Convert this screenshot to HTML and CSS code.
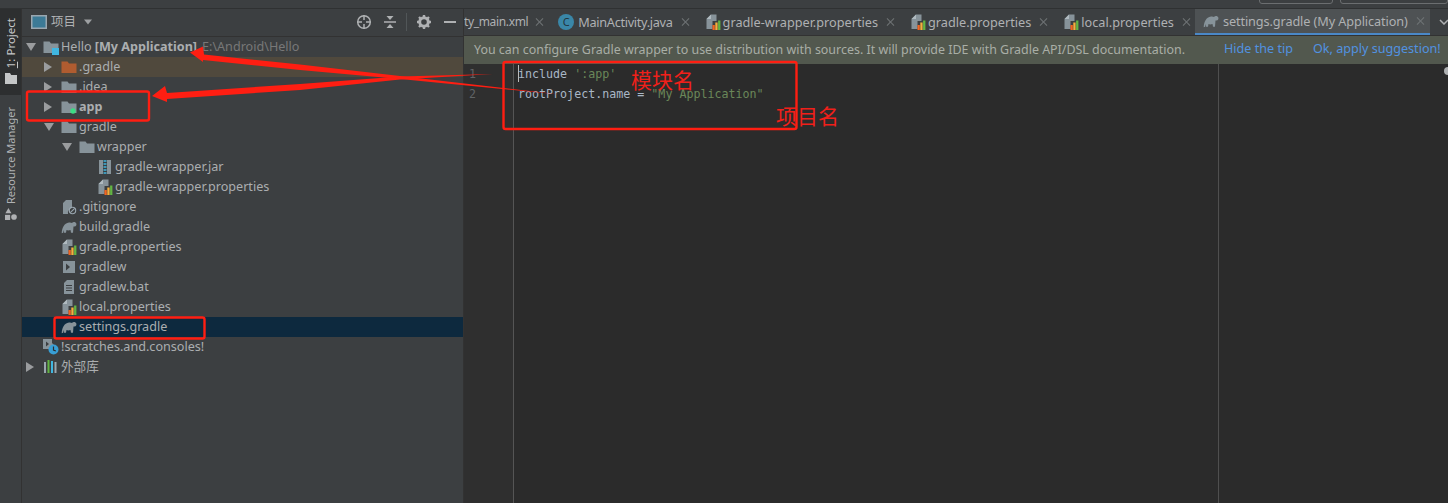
FILE: index.html
```html
<!DOCTYPE html>
<html lang="zh">
<head>
<meta charset="utf-8">
<title>settings.gradle</title>
<link rel="stylesheet" href="styles.css">
</head>
<body>
<svg class="defs" width="0" height="0" aria-hidden="true">
  <defs>
    <symbol id="folder" viewBox="0 0 16 16"><path d="M0.500 2.500h6l1.500 2h7.500v9.500H0.500z" fill="#87939a"/></symbol>
    <symbol id="props" viewBox="0 0 16 16"><path d="M6 0.500h5.500V7H7.500v8H1.500V5z" fill="#87939a"/><path d="M6 .5L1.500 5H6z" fill="#b0bac0"/><rect x="7.500" y="11" width="2.300" height="5" fill="#f26522"/><rect x="10.300" y="8.500" width="2.300" height="7.500" fill="#f4af3d"/><rect x="13.100" y="6.500" width="2.300" height="9.500" fill="#62b543"/></symbol>
    <symbol id="elephant" viewBox="0 0 16 16"><path d="M.7 14.300C1 9 3 4.300 8 3.600c1.500-.2 2.500.2 3 .4 1-1.500 3.500-1.500 4.300.5.500 1.500-.3 3-1.800 3h-1l-.5 6.300h-2l-.5-2.800c-1.500.5-3 .5-4 0l-.5 2.800h-2l-.2-2.800c-.3 1-.6 2-.6 2.800z" fill="#87939a"/></symbol>
  </defs>
</svg>

<div class="titlebar">
  <span class="combo combo-run"></span>
  <span class="combo combo-device"></span>
</div>

<div class="workspace">
  <aside class="stripe">
    <div class="stripe-tab stripe-tab-active">
      <svg class="stripe-icon" viewBox="0 0 12 12"><path d="M0 1h5l1.200 2H12v9H0z" fill="#c4c6c7"/></svg>
      <span class="vertical"><span class="u">1</span>: Project</span>
    </div>
    <div class="stripe-tab">
      <svg class="stripe-icon" viewBox="0 0 14 14"><path d="M4 0l3.500 6h-7z" fill="#afb1b3"/><rect x="0" y="8" width="6" height="6" fill="#afb1b3"/><circle cx="10.500" cy="10.500" r="3.300" fill="#afb1b3"/></svg>
      <span class="vertical">Resource Manager</span>
    </div>
  </aside>

  <section class="panel">
    <header class="panel-head">
      <svg class="view-icon" viewBox="0 0 16 14"><rect x=".75" y=".75" width="14.500" height="12.500" fill="#3c7a96" stroke="#9aa7b0" stroke-width="1.500"/></svg>
      <span class="panel-title">项目</span>
      <svg class="caret" viewBox="0 0 10 6"><path d="M1 .5h8L5 5.500z" fill="#9da0a2"/></svg>
      <span class="spacer"></span>
      <svg class="tool" viewBox="0 0 16 16"><circle cx="8" cy="8" r="6.300" fill="none" stroke="#afb1b3" stroke-width="1.500"/><path d="M8 1v5M8 10v5M1 8h5M10 8h5" stroke="#afb1b3" stroke-width="1.500"/></svg>
      <svg class="tool tool-b" viewBox="0 0 16 16"><path d="M2 8h12" stroke="#afb1b3" stroke-width="1.500"/><path d="M4.500 2h7L8 6zM4.500 14h7L8 10z" fill="#afb1b3"/></svg>
      <span class="sep"></span>
      <svg class="tool tool-c" viewBox="0 0 16 16"><circle cx="8" cy="8" r="4.300" fill="none" stroke="#afb1b3" stroke-width="3"/><path d="M8 1v3M8 12v3M1 8h3M12 8h3M3 3l2 2M11 11l2 2M13 3l-2 2M5 11l-2 2" stroke="#afb1b3" stroke-width="2.400"/></svg>
      <svg class="tool tool-d" viewBox="0 0 16 16"><path d="M2 8h12" stroke="#afb1b3" stroke-width="2"/></svg>
    </header>

    <ul class="tree">
      <li class="row d0"><i class="tw open"></i><span class="ic"><svg viewBox="0 0 16 16"><use href="#folder"/><rect x="9" y="9" width="7" height="7" fill="#40b6e0"/></svg></span><span class="name">Hello <b>[My Application]</b></span><span class="path">E:\Android\Hello</span></li>
      <li class="row d1 row-excluded"><i class="tw"></i><span class="ic"><svg viewBox="0 0 16 16"><path d="M.5 2.500h6l1.500 2h7.500v9.500H.5z" fill="#b05c30"/></svg></span><span class="name">.gradle</span></li>
      <li class="row d1"><i class="tw"></i><span class="ic"><svg><use href="#folder"/></svg></span><span class="name">.idea</span></li>
      <li class="row d1"><i class="tw"></i><span class="ic"><svg viewBox="0 0 16 16"><use href="#folder"/><circle cx="12" cy="12" r="2.700" fill="#3ddc84"/></svg></span><span class="name"><b>app</b></span></li>
      <li class="row d1"><i class="tw open"></i><span class="ic"><svg><use href="#folder"/></svg></span><span class="name">gradle</span></li>
      <li class="row d2"><i class="tw open"></i><span class="ic"><svg><use href="#folder"/></svg></span><span class="name">wrapper</span></li>
      <li class="row d3"><i class="tw none"></i><span class="ic"><svg viewBox="0 0 16 16"><rect x="2" y="1" width="12" height="14" fill="#87939a"/><rect x="6" y="1" width="4" height="14" fill="#3c3f41"/><path d="M6.500 2h3M6.500 5h3M6.500 8h3M6.500 11h3M6.500 14h3" stroke="#40b6e0" stroke-width="1.300"/></svg></span><span class="name">gradle-wrapper.jar</span></li>
      <li class="row d3"><i class="tw none"></i><span class="ic"><svg><use href="#props"/></svg></span><span class="name">gradle-wrapper.properties</span></li>
      <li class="row d1"><i class="tw none"></i><span class="ic"><svg viewBox="0 0 16 16"><path d="M5 1h6v8a5 5 0 0 0-4 6H2V4z" fill="#87939a"/><circle cx="11.500" cy="11.500" r="3.200" fill="none" stroke="#9aa7b0" stroke-width="1.100"/><path d="M9.300 13.700l4.400-4.400" stroke="#9aa7b0" stroke-width="1.100"/></svg></span><span class="name">.gitignore</span></li>
      <li class="row d1"><i class="tw none"></i><span class="ic"><svg><use href="#elephant"/></svg></span><span class="name">build.gradle</span></li>
      <li class="row d1"><i class="tw none"></i><span class="ic"><svg><use href="#props"/></svg></span><span class="name">gradle.properties</span></li>
      <li class="row d1"><i class="tw none"></i><span class="ic"><svg viewBox="0 0 16 16"><rect x="2" y="2" width="12" height="12" fill="#87939a"/><path d="M5 4.500L9 8l-4 3.500z" fill="#3c3f41"/></svg></span><span class="name">gradlew</span></li>
      <li class="row d1"><i class="tw none"></i><span class="ic"><svg viewBox="0 0 16 16"><path d="M6 1h7v14H3V4z" fill="#87939a"/><path d="M5 6.500h6M5 9h6M5 11.500h6" stroke="#3c3f41" stroke-width="1.100"/></svg></span><span class="name">gradlew.bat</span></li>
      <li class="row d1"><i class="tw none"></i><span class="ic"><svg><use href="#props"/></svg></span><span class="name">local.properties</span></li>
      <li class="row d1 row-selected"><i class="tw none"></i><span class="ic"><svg><use href="#elephant"/></svg></span><span class="name">settings.gradle</span></li>
      <li class="row d0"><i class="tw none"></i><span class="ic"><svg viewBox="0 0 16 16"><path d="M0 0h9v4l2 2a5.500 5.500 0 0 0-5 4H0z" fill="#87939a"/><path d="M3 2.500L6 5 3 7.500z" fill="#3c3f41"/><circle cx="10.500" cy="10.500" r="5" fill="#389fd6"/><path d="M10.500 7.500v3.500l2.300 1" fill="none" stroke="#2b2d2e" stroke-width="1.200"/></svg></span><span class="name">!scratches.and.consoles!</span></li>
      <li class="row d0"><i class="tw"></i><span class="ic"><svg viewBox="0 0 16 16"><rect x="1" y="3" width="2" height="11" fill="#9aa7b0"/><rect x="4.500" y="1" width="2" height="13" fill="#62b543"/><rect x="8" y="2" width="2" height="12" fill="#40b6e0"/><rect x="11.500" y="3" width="2" height="11" fill="#9aa7b0"/></svg></span><span class="name">外部库</span></li>
    </ul>
  </section>

  <main class="editor">
    <nav class="tabs">
      <div class="tab tab-first"><span>ty_main.xml</span><i class="x"></i></div>
      <div class="tab tab-java"><span class="cls">C</span><span>MainActivity.java</span><i class="x"></i></div>
      <div class="tab"><svg class="tab-ic"><use href="#props"/></svg><span>gradle-wrapper.properties</span><i class="x"></i></div>
      <div class="tab"><svg class="tab-ic"><use href="#props"/></svg><span>gradle.properties</span><i class="x"></i></div>
      <div class="tab"><svg class="tab-ic"><use href="#props"/></svg><span>local.properties</span><i class="x"></i></div>
      <div class="tab tab-active"><svg class="tab-ic"><use href="#elephant"/></svg><span>settings.gradle (My Application)</span><i class="x"></i></div>
      <svg class="chevron" viewBox="0 0 10 6"><path d="M1 1l4 4 4-4" fill="none" stroke="#afb1b3" stroke-width="1.500"/></svg>
    </nav>
    <div class="notice">
      <span class="notice-text">You can configure Gradle wrapper to use distribution with sources. It will provide IDE with Gradle API/DSL documentation.</span>
      <a class="link link-hide">Hide the tip</a>
      <a class="link">Ok, apply suggestion!</a>
    </div>
    <div class="code">
      <div class="gutter"><div>1</div><div>2</div></div>
      <div class="lines">
        <div class="line"><span class="caret-bar"></span>include <span class="str">':app'</span></div>
        <div class="line">rootProject.name = <span class="str">"My Application"</span></div>
      </div>
      <span class="margin-line"></span>
      <span class="inspect"></span>
    </div>
  </main>
</div>

<!-- red annotations drawn over the screenshot -->
<svg class="marks" viewBox="0 0 1448 503" aria-hidden="true">
  <path d="M190 52.500L203 46.500L204 54.500L300 64.500L400 76L560 94.500L400 79L300 70L203 60L203 62z" fill="#ff1e12"/>
  <path d="M152 96L165 86L167 93L300 84L400 76.500L493 74L400 79.500L300 90L167 99L167 102z" fill="#ff1e12"/>
  <g fill="none" stroke="#ff1e12" stroke-width="2.400">
    <rect x="27" y="91.500" width="122" height="29" rx="2"/>
    <rect x="54.500" y="317.500" width="150" height="21" rx="2"/>
    <rect x="503.500" y="62" width="293" height="67" rx="2"/>
  </g>
</svg>
<span class="note note-module">模块名</span>
<span class="note note-project">项目名</span>
</body>
</html>
```

FILE: styles.css
```css
* { box-sizing: border-box; }
html, body { margin: 0; padding: 0; }
body {
  width: 1448px;
  height: 503px;
  overflow: hidden;
  position: relative;
  display: flex;
  flex-direction: column;
  background: #3c3f41;
  color: #afb1b3;
  font: 12.700px/20px "Noto Sans", "Noto Sans CJK SC", sans-serif;
}
.defs { position: absolute; }

.titlebar {
  height: 9px;
  flex: none;
  background: #3c3f41;
  border-bottom: 1px solid #2f3132;
  overflow: hidden;
  display: flex;
  justify-content: flex-end;
  gap: 7px;
}
.combo {
  display: block;
  height: 12px;
  margin-top: -8px;
  border: 1px solid #6b6e70;
  border-radius: 3px;
}
.combo-run { width: 74px; }
.combo-device { width: 108px; margin-right: 0; }

.workspace { flex: 1; min-height: 0; display: flex; }

.stripe {
  width: 22px;
  flex: none;
  background: #3c3f41;
  border-right: 1px solid #323232;
  display: flex;
  flex-direction: column;
}
.stripe-tab {
  display: flex;
  flex-direction: column-reverse;
  align-items: center;
  gap: 4px;
  padding: 12px 0 4px;
  color: #b0b2b4;
}
.stripe-tab-active { height: 86px; background: #2d2f30; padding: 8px 0 11px; justify-content: flex-start; }
.stripe-tab-active .vertical { font-size: 11.500px; color: #c4c6c7; }
.stripe-icon { width: 12px; height: 12px; flex: none; }
.vertical {
  writing-mode: vertical-rl;
  transform: rotate(180deg);
  line-height: 14px;
  white-space: nowrap;
  font-size: 11px;
}
.u { text-decoration: underline; }

.panel {
  width: 442px;
  flex: none;
  background: #3c3f41;
  border-right: 1px solid #323232;
  display: flex;
  flex-direction: column;
  min-height: 0;
}
.panel-head {
  height: 28px;
  flex: none;
  display: flex;
  align-items: center;
  padding: 0 0 2px 9px;
  border-bottom: 1px solid #323232;
}
.view-icon { width: 16px; height: 14px; }
.panel-title { margin-left: 4px; color: #afb1b3; font-size: 12.500px; }
.caret { width: 10px; height: 6px; margin-left: 7px; }
.spacer { flex: 1; }
.tool { width: 16px; height: 16px; flex: none; }
.tool-b { margin-left: 10px; }
.sep { width: 1px; height: 18px; background: #515658; margin: 0 9px 0 8px; }
.tool-d { margin: 0 5px 0 10px; }

.tree { list-style: none; margin: 0; padding: 0; font-size: 12.600px; }
.row { height: 20px; display: flex; align-items: center; white-space: nowrap; }
.d0 { padding-left: 3px; }
.d1 { padding-left: 21px; }
.d2 { padding-left: 39px; }
.d3 { padding-left: 57px; }
.row-excluded { background: #50493d; }
.row-selected { background: #0d293e; }
.tw { width: 18px; flex: none; display: flex; justify-content: flex-start; padding-left: 1px; }
.tw::before {
  content: "";
  border-left: 8px solid #9a9c9e;
  border-top: 5px solid transparent;
  border-bottom: 5px solid transparent;
}
.tw.open::before {
  border-top: 8px solid #9a9c9e;
  border-left: 5px solid transparent;
  border-right: 5px solid transparent;
  border-bottom: 0;
}
.tw.none::before { display: none; }
.ic { width: 16px; height: 16px; flex: none; }
.ic svg { display: block; width: 16px; height: 16px; }
.name { margin: 0 0 0 2px; color: #abaeb0; }
.name b { font-weight: 700; }
.path { margin: 0 0 0 5px; color: #787878; }

.editor {
  flex: 1;
  min-width: 0;
  display: flex;
  flex-direction: column;
  background: #2b2b2b;
}
.tabs {
  height: 27px;
  flex: none;
  display: flex;
  background: #3c3f41;
  border-bottom: 1px solid #323232;
  position: relative;
  overflow: hidden;
}
.tab {
  height: 26px;
  flex: none;
  display: flex;
  align-items: center;
  padding-left: 16px;
  color: #afb1b3;
  white-space: nowrap;
}
.tab-first { padding-left: 0; font-size: 12px; letter-spacing: -.35px; }
.tab-first .x { margin-left: 7px; }
.tab-java > span:nth-child(2) { letter-spacing: -.3px; }
.tab-ic { width: 16px; height: 16px; margin-right: 2px; flex: none; }
.cls {
  width: 16px;
  height: 16px;
  margin: 0 4px 0 -1px;
  border-radius: 50%;
  background: #3a87a8;
  color: #22343d;
  font-size: 11px;
  line-height: 16px;
  text-align: center;
}
.x { width: 8px; height: 8px; margin-left: 8px; position: relative; flex: none; }
.x::before, .x::after {
  content: "";
  position: absolute;
  left: 4px;
  top: -1px;
  width: 1px;
  height: 10px;
  background: #6f7375;
  transform: rotate(45deg);
}
.x::after { transform: rotate(-45deg); }
.tab-active {
  height: 27px;
  margin-left: 5px;
  width: 235px;
  background: #4e5254;
  border-bottom: 3px solid #4a88c7;
  padding: 0 0 0 8px;
  letter-spacing: -.1px;
}
.tab-active .tab-ic { margin-right: 4px; }
.chevron { width: 10px; height: 6px; margin: 10px 0 0 9px; flex: none; }

.notice {
  height: 28px;
  flex: none;
  display: flex;
  align-items: center;
  padding-left: 10px;
  background: #52584e;
  color: #a9aea6;
  white-space: nowrap;
  overflow: hidden;
  font-size: 12.450px;
}
.notice-text { flex: none; }
.link { color: #5192e0; flex: none; margin-bottom: 2px; font-size: 12.600px; }
.link-hide { margin-left: 39px; margin-right: 20px; }

.code { flex: 1; display: flex; position: relative; min-height: 0; }
.gutter {
  width: 50px;
  flex: none;
  border-right: 1px solid #555;
  background: #2f2f2f;
  font: 11.600px/20px "DejaVu Sans Mono", monospace;
  color: #606366;
  padding: 0 31px 0 5px;
  text-align: left;
}
.lines { padding-left: 4px; font: 11.670px/20px "DejaVu Sans Mono", monospace; color: #a9b7c6; }
.line { height: 20px; white-space: pre; position: relative; }
.str { color: #6a8759; }
.caret-bar { position: absolute; left: 0; top: 1px; width: 1px; height: 17px; background: #bbb; }
.margin-line { position: absolute; left: 754px; top: 0; bottom: 0; width: 1px; background: #4f4f4f; }
.inspect {
  position: absolute;
  right: -4px;
  top: 3px;
  width: 8px;
  height: 8px;
  border-radius: 50%;
  background: #afb1b3;
}

.marks { position: absolute; left: 0; top: 0; width: 1448px; height: 503px; pointer-events: none; }
.note {
  position: absolute;
  color: #f0201a;
  font: 21px/24px "Noto Sans CJK SC", sans-serif;
  white-space: nowrap;
}
.note-module { left: 631px; top: 67px; }
.note-project { left: 776px; top: 103px; }
```
